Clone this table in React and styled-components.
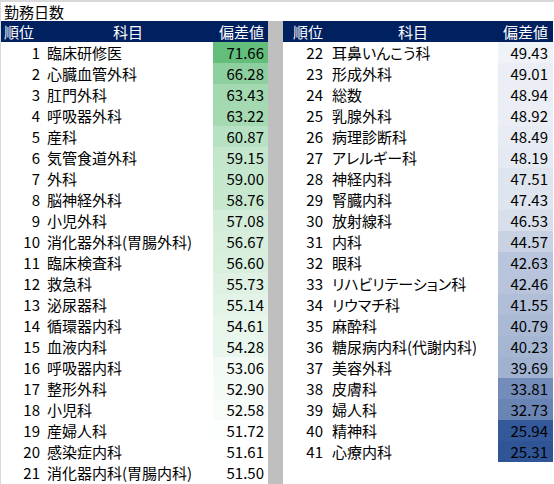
import React from 'react'
import { styled, createGlobalStyle } from 'styled-components'

const GlobalStyle = createGlobalStyle`
  html, body {
    margin: 0;
    padding: 0;
    background: #ffffff;
  }
  body {
    font-family: "Noto Sans CJK JP", "Noto Sans", sans-serif;
    color: #000000;
  }
`

const rows = [
  [1, '臨床研修医', 71.66],
  [2, '心臓血管外科', 66.28],
  [3, '肛門外科', 63.43],
  [4, '呼吸器外科', 63.22],
  [5, '産科', 60.87],
  [6, '気管食道外科', 59.15],
  [7, '外科', 59.0],
  [8, '脳神経外科', 58.76],
  [9, '小児外科', 57.08],
  [10, '消化器外科(胃腸外科)', 56.67],
  [11, '臨床検査科', 56.6],
  [12, '救急科', 55.73],
  [13, '泌尿器科', 55.14],
  [14, '循環器内科', 54.61],
  [15, '血液内科', 54.28],
  [16, '呼吸器内科', 53.06],
  [17, '整形外科', 52.9],
  [18, '小児科', 52.58],
  [19, '産婦人科', 51.72],
  [20, '感染症内科', 51.61],
  [21, '消化器内科(胃腸内科)', 51.5],
  [22, '耳鼻いんこう科', 49.43],
  [23, '形成外科', 49.01],
  [24, '総数', 48.94],
  [25, '乳腺外科', 48.92],
  [26, '病理診断科', 48.49],
  [27, 'アレルギー科', 48.19],
  [28, '神経内科', 47.51],
  [29, '腎臓内科', 47.43],
  [30, '放射線科', 46.53],
  [31, '内科', 44.57],
  [32, '眼科', 42.63],
  [33, 'リハビリテーション科', 42.46],
  [34, 'リウマチ科', 41.55],
  [35, '麻酔科', 40.79],
  [36, '糖尿病内科(代謝内科)', 40.23],
  [37, '美容外科', 39.69],
  [38, '皮膚科', 33.81],
  [39, '婦人科', 32.73],
  [40, '精神科', 25.94],
  [41, '心療内科', 25.31],
]

const MAX = 71.66
const MID = 51.5
const MIN = 25.31
const GREEN = [99, 190, 123]
const BLUE = [47, 85, 151]

// 3色スケール（中央値で白）
const scaleColor = (v) => {
  let target, t
  if (v >= MID) {
    target = GREEN
    t = (v - MID) / (MAX - MID)
  } else {
    target = BLUE
    t = (MID - v) / (MID - MIN)
  }
  const c = target.map((ch) => Math.round(255 - t * (255 - ch)))
  return `rgb(${c[0]}, ${c[1]}, ${c[2]})`
}

function App() {
  const left = rows.slice(0, 21)
  const right = rows.slice(21)

  return (
    <Wrapper>
      <GlobalStyle />
      <Title>勤務日数</Title>
      <Body>
        <Table $rankWidth={42}>
          <HeadCell $align="left" $pad={3}>順位</HeadCell>
          <HeadCell $align="center">科目</HeadCell>
          <HeadCell $align="right" $pad={4}>偏差値</HeadCell>
          {left.map(([rank, name, value]) => (
            <React.Fragment key={rank}>
              <Rank>{rank}</Rank>
              <Name>{name}</Name>
              <Value style={{ background: scaleColor(value) }}>{value.toFixed(2)}</Value>
            </React.Fragment>
          ))}
        </Table>
        <Separator />
        <Table $rankWidth={45}>
          <HeadCell $align="left" $pad={10}>順位</HeadCell>
          <HeadCell $align="center">科目</HeadCell>
          <HeadCell $align="right" $pad={5}>偏差値</HeadCell>
          {right.map(([rank, name, value]) => (
            <React.Fragment key={rank}>
              <Rank $pad={5}>{rank}</Rank>
              <Name>{name}</Name>
              <Value $pad={5} style={{ background: scaleColor(value) }}>{value.toFixed(2)}</Value>
            </React.Fragment>
          ))}
        </Table>
      </Body>
    </Wrapper>
  )
}

export default App

const Wrapper = styled.div`
  width: 553px;
  height: 482px;
  border-top: 2px solid #d9d9d9;
  border-left: 1px solid #d9d9d9;
  font-size: 15px;
  overflow: hidden;
`

const Title = styled.div`
  height: 19px;
  line-height: 19px;
  padding-left: 3px;
  font-size: 15px;
`

const Body = styled.div`
  display: flex;
  height: 463px;
`

const Table = styled.div`
  display: grid;
  grid-template-columns: ${(p) => p.$rankWidth}px 170px 55px;
  grid-auto-rows: 21px;
  align-content: start;
`

const HeadCell = styled.div`
  background: #002060;
  color: #ffffff;
  line-height: 21px;
  white-space: nowrap;
  text-align: ${(p) => p.$align};
  padding: ${(p) => (p.$align === 'left' ? `0 0 0 ${p.$pad}px` : p.$align === 'right' ? `0 ${p.$pad}px 0 0` : '0')};
`

const Rank = styled.div`
  line-height: 21px;
  text-align: right;
  padding-right: ${(p) => p.$pad ?? 3}px;
`

const Name = styled.div`
  line-height: 21px;
  padding-left: 4px;
  white-space: nowrap;
  font-feature-settings: "palt";
`

const Value = styled.div`
  line-height: 21px;
  text-align: right;
  padding-right: ${(p) => p.$pad ?? 4}px;
`

const Separator = styled.div`
  width: 15px;
  background: #bfbfbf;
`
